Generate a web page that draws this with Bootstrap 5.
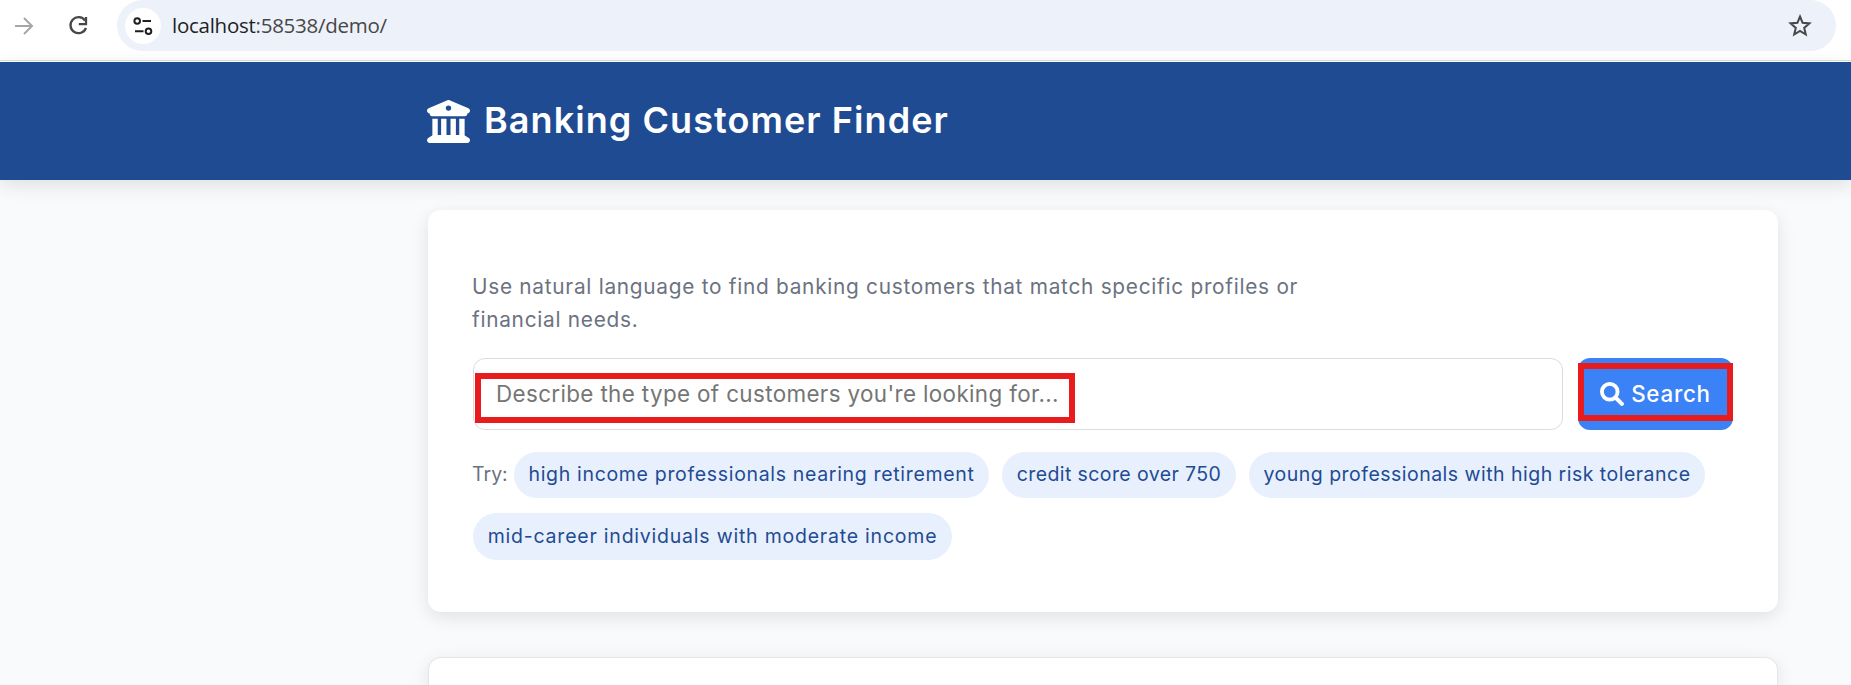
<!DOCTYPE html>
<html lang="en">
<head>
<meta charset="utf-8">
<meta name="viewport" content="width=device-width, initial-scale=1">
<title>Banking Customer Finder</title>
<link href="https://cdn.jsdelivr.net/npm/bootstrap@5.3.0/dist/css/bootstrap.min.css" rel="stylesheet">
<style>
body{height:685px;background:#f9fafc;font-family:Inter,"Liberation Sans",sans-serif;overflow:hidden}
.toolbar{height:62px;border-bottom:1px solid #fff}
.toolbar::after{content:"";position:absolute;left:0;right:0;top:60px;height:1px;background:#d6e6da}
.nav-icons{width:117px;height:51px}
.address{width:1719px;height:51px;background:#ecf1fa;border-radius:26px}
.site-info{width:36px;height:36px;margin-left:8px}
.url{font:20.5px/30px "Open Sans",sans-serif;color:#474747;margin-left:11px;letter-spacing:-.26px;white-space:nowrap;padding-bottom:1px}
.url b{font-weight:400;color:#1f1f1f}
.star{margin-right:23px}
.brand-bar{height:118px;background:#1f4b93;box-shadow:0 5px 18px rgba(0,0,0,.11);padding-left:427px}
.brand-title{font-size:36px;font-weight:600;line-height:44px;letter-spacing:1.07px;margin:0 0 2px 14px;white-space:nowrap}
.wrap{width:1350px;margin-left:428px}
.panel{border:0;border-radius:13px;box-shadow:0 5px 18px rgba(0,0,0,.1)}
.search-panel{height:402px;margin-top:30px;padding:60px 45px 0}
.results-panel{height:28px;margin-top:45px;border:1px solid #e3e6ea;border-bottom:0;border-radius:13px 13px 0 0}
.intro{width:850px;font-size:20.8px;letter-spacing:.73px;line-height:33px;color:#6b7280;margin:0 0 22px -1px;white-space:nowrap}
.search-row{gap:15px}
.query{width:1090px;height:72px;border:1px solid #dcdcdc;border-radius:12px;padding:0 22px;font-size:22.4px;letter-spacing:.37px;color:#757575;white-space:nowrap}
.go,.go:hover{width:155px;height:72px;border:0;border-radius:12px;background:#3b82f6;color:#fff;font-size:22.4px;font-weight:500;padding:0;letter-spacing:.75px}
.go-text{margin-left:7px}
.outline-box{position:absolute;border:6px solid #e81c1c}
.o-query{left:1px;top:14px;width:600px;height:50px}
.o-go{left:0;top:5px;width:155px;height:58px}
.tries{margin-top:22px;color:#6b7280;font-size:19.5px}
.chip{background:#e8f0fe;color:#1f4b93;font-size:19.5px;height:46px;border-radius:24px;white-space:nowrap}
.try-label{width:42px;margin-left:-1px}
.c1{width:475px;letter-spacing:.67px}
.c2{width:234px;margin-left:13px;letter-spacing:.4px}
.c3{width:456px;margin-left:13px;letter-spacing:.48px}
.c4{width:479px;height:47px;letter-spacing:.78px}
.second-line{margin-top:15px}
</style>
</head>
<body>
<div class="toolbar bg-white d-flex position-relative">
  <div class="nav-icons d-flex">
    <svg width="117" height="51" fill="none"><path d="M15 26H32M24 18l8 8-8 8" stroke="#a6a6a6" stroke-width="2"/><path d="M85 20.5A8 8 0 1 0 86 28" stroke="#474747" stroke-width="2.3"/><path d="M86 17v7.2h-7.2" stroke="#474747" stroke-width="2.3"/></svg>
  </div>
  <div class="address d-flex align-items-center">
    <span class="site-info bg-white rounded-circle"><svg width="36" height="36" fill="none" stroke="#1f1f1f" stroke-width="2"><circle cx="12.2" cy="13" r="2.8"/><path d="M17.500 13H26M10 23.200h8.500"/><circle cx="23.5" cy="23.2" r="2.8"/></svg></span>
    <span class="url"><b>localhost</b>:58538/demo/</span>
    <svg class="star ms-auto" width="26" height="26" viewBox="0 0 26 26"><path d="M13 3.500l2.600 6.300 6.800.6-5.200 4.500 1.600 6.600-5.800-3.500-5.800 3.500 1.600-6.600-5.200-4.500 6.800-.6z" fill="none" stroke="#474747" stroke-width="2"/></svg>
  </div>
</div>
<header class="brand-bar d-flex align-items-center text-white position-relative">
  <svg width="43" height="43" viewBox="0 0 512 512" fill="#fff"><path fill-rule="evenodd" d="M243.400 2.600l-224 96c-14 6-21.800 21-18.700 35.800S16.800 160 32 160v8c0 13.300 10.700 24 24 24h400c13.300 0 24-10.700 24-24v-8c15.200 0 28.300-10.700 31.300-25.600s-4.800-29.900-18.700-35.800l-224-96c-8-3.400-17.200-3.400-25.200 0zM256 64a32 32 0 1 1 0 64 32 32 0 1 1 0-64zM128 224H64v196.300c-.6.3-1.200.7-1.800 1.100l-48 32c-11.700 7.800-17 22.400-12.900 35.900S17.900 512 32 512h448c14.100 0 26.500-9.200 30.600-22.700s-1.100-28.100-12.900-35.900l-48-32c-.6-.4-1.200-.7-1.700-1V224h-64v192h-40V224h-64v192h-48V224h-64v192h-40z"/></svg>
  <h1 class="brand-title">Banking Customer Finder</h1>
</header>
<main class="wrap">
  <section class="card panel search-panel">
    <p class="intro">Use natural language to find banking customers that match specific profiles or<br>financial needs.</p>
    <div class="search-row d-flex">
      <div class="query d-flex align-items-center position-relative bg-white"><span>Describe the type of customers you're looking for...</span><span class="outline-box o-query"></span></div>
      <button class="go btn d-flex align-items-center justify-content-center position-relative" type="button"><svg width="24" height="24" viewBox="0 0 512 512" fill="none" stroke="#fff"><circle cx="208" cy="208" r="167" stroke-width="82"/><path d="M335 335L466 466" stroke-width="88" stroke-linecap="round"/></svg><span class="go-text">Search</span><span class="outline-box o-go"></span></button>
    </div>
    <div class="tries">
      <div class="d-flex align-items-center"><span class="try-label">Try:</span><span class="chip c1 d-flex align-items-center justify-content-center">high income professionals nearing retirement</span><span class="chip c2 d-flex align-items-center justify-content-center">credit score over 750</span><span class="chip c3 d-flex align-items-center justify-content-center">young professionals with high risk tolerance</span></div>
      <div class="second-line d-flex"><span class="chip c4 d-flex align-items-center justify-content-center">mid-career individuals with moderate income</span></div>
    </div>
  </section>
  <section class="card panel results-panel"></section>
</main>
<script src="https://cdn.jsdelivr.net/npm/bootstrap@5.3.0/dist/js/bootstrap.bundle.min.js"></script>
</body>
</html>
